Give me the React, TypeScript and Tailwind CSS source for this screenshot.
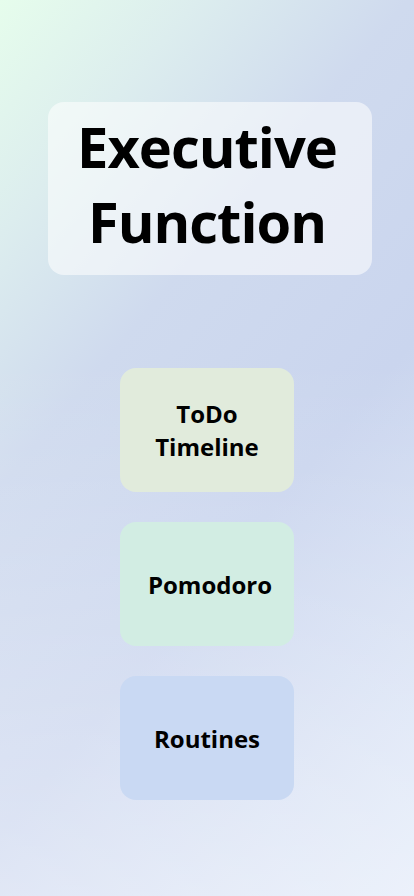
import React from "react";

const cards = [
  { label: ["ToDo", "Timeline"], cls: "bg-[#e1ebdc]" },
  { label: ["Pomodoro"], cls: "bg-[#d2ede3] pl-[6px]" },
  { label: ["Routines"], cls: "bg-[#c9d9f3]" },
];

export default function App() {
  return (
    <div className="min-h-screen w-full flex flex-col items-center font-['Open_Sans',sans-serif] text-black bg-[linear-gradient(to_bottom,transparent_40%,rgba(255,255,255,0.4)),linear-gradient(130deg,#e6fdec_0%,#dcedee_17%,#cfdaee_35%,#cad5ee_60%,#dfe8f8_100%)]">
      <div className="mt-[102px] ml-[6px] w-[324px] rounded-2xl bg-white/55 pt-[7px] pb-[16px] pr-[6px] text-center">
        <h1 className="text-[56px] font-bold leading-[75px] tracking-[-1px]">
          Executive
          <br />
          Function
        </h1>
      </div>
      <div className="mt-[93px] flex flex-col gap-[30px]">
        {cards.map((c) => (
          <button
            key={c.label.join(" ")}
            className={`w-[174px] h-[124px] rounded-2xl flex flex-col items-center justify-center text-[24px] font-bold leading-[33px] ${c.cls}`}
          >
            {c.label.map((l) => (
              <span key={l}>{l}</span>
            ))}
          </button>
        ))}
      </div>
    </div>
  );
}
